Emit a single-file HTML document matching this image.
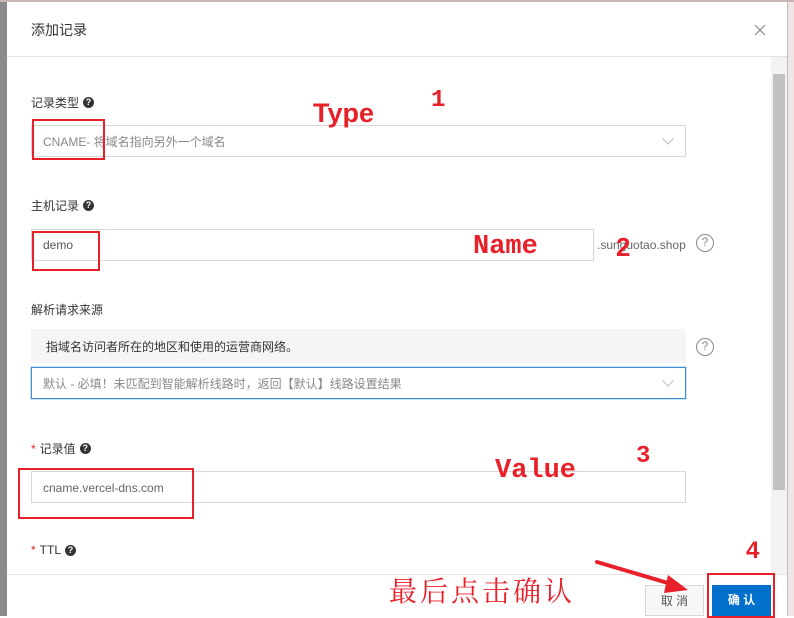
<!DOCTYPE html>
<html><head><meta charset="utf-8"><style>
*{margin:0;padding:0;box-sizing:border-box}
body{width:794px;height:616px;overflow:hidden;position:relative;background:#fff;font-family:"Liberation Sans","Noto Sans CJK SC",sans-serif;font-size:12px;color:#333}
.a{position:absolute}
.lbl{font-size:12px;color:#333;display:flex;align-items:center;gap:4px}
.q{display:inline-block;width:11px;height:11px;border-radius:50%;background:#333;color:#fff;font-size:9px;line-height:11px;text-align:center;font-weight:bold}
.box{border:1px solid #d7d7d7;background:#fff}
.txt{color:#888;font-size:12px}
.qc{width:18px;height:18px;border:1.5px solid #888;border-radius:50%;color:#888;font-size:12px;line-height:15px;text-align:center}
.red{border:2px solid #e8202a}
.rt{color:#e8202a;font-weight:bold;font-family:"Liberation Mono",monospace}
.chev{width:8px;height:8px;border-right:1px solid #bbb;border-bottom:1px solid #bbb;transform:rotate(45deg)}
.star{color:#e8202a}
</style></head><body>
<div class="a" style="left:0;top:0;width:7px;height:616px;background:#8a8a8a"></div>
<div class="a" style="left:787px;top:0;width:7px;height:616px;background:#efe5e5;border-left:1px solid #c8b8b8"></div>
<div class="a" style="left:0;top:0;width:794px;height:2px;background:#c9b5b5"></div>
<div class="a" style="left:31px;top:20px;font-size:14px;color:#333">添加记录</div>
<svg class="a" style="left:754px;top:24px" width="12" height="12"><path d="M1 1L11 11M11 1L1 11" stroke="#888" stroke-width="1.2"/></svg>
<div class="a" style="left:7px;top:56px;width:780px;height:1px;background:#e3e3e3"></div>
<div class="a" style="left:771px;top:57px;width:16px;height:517px;background:#f2f2f2"></div>
<div class="a" style="left:773px;top:74px;width:12px;height:416px;background:#c1c1c1"></div>
<div class="a lbl" style="left:31px;top:94px">记录类型 <span class="q">?</span></div>
<div class="a box" style="left:31px;top:125px;width:655px;height:32px"></div>
<div class="a txt" style="left:43px;top:133px">CNAME- 将域名指向另外一个域名</div>
<div class="a chev" style="left:664px;top:135px"></div>
<div class="a lbl" style="left:31px;top:197px">主机记录 <span class="q">?</span></div>
<div class="a box" style="left:31px;top:229px;width:563px;height:32px"></div>
<div class="a txt" style="left:43px;top:238px;color:#555">demo</div>
<div class="a" style="left:597px;top:238px;color:#666;font-size:12px">.sunguotao.shop</div>
<div class="a qc" style="left:696px;top:234px">?</div>
<div class="a lbl" style="left:31px;top:301px">解析请求来源</div>
<div class="a" style="left:31px;top:329px;width:655px;height:34px;background:#f5f5f5"></div>
<div class="a" style="left:46px;top:338px;color:#333">指域名访问者所在的地区和使用的运营商网络。</div>
<div class="a qc" style="left:696px;top:338px">?</div>
<div class="a" style="left:31px;top:367px;width:655px;height:32px;border:1.5px solid #3b8fd6;box-shadow:0 0 0 1px #cfe3f5"></div>
<div class="a txt" style="left:43px;top:375px">默认 - 必填！未匹配到智能解析线路时，返回【默认】线路设置结果</div>
<div class="a chev" style="left:664px;top:377px"></div>
<div class="a lbl" style="left:31px;top:440px"><span class="star">*</span>记录值 <span class="q">?</span></div>
<div class="a box" style="left:31px;top:471px;width:655px;height:32px"></div>
<div class="a txt" style="left:43px;top:481px;color:#666">cname.vercel-dns.com</div>
<div class="a lbl" style="left:31px;top:543px"><span class="star">*</span>TTL<span class="q">?</span></div>
<div class="a" style="left:7px;top:574px;width:780px;height:1px;background:#e3e3e3"></div>
<div class="a" style="left:645px;top:585px;width:59px;height:31px;border:1px solid #d7d7d7;background:#f7f7f7;color:#555;text-align:center;line-height:30px">取 消</div>
<div class="a" style="left:712px;top:585px;width:59px;height:31px;background:#0070cc;color:#fff;text-align:center;line-height:31px;font-weight:bold">确 认</div>
<div class="a red" style="left:32px;top:119px;width:73px;height:41px"></div>
<div class="a red" style="left:32px;top:231px;width:68px;height:40px"></div>
<div class="a red" style="left:18px;top:468px;width:176px;height:51px"></div>
<div class="a red" style="left:707px;top:573px;width:68px;height:45px"></div>
<div class="a rt" style="left:313px;top:98px;font-size:27px;font-family:'Liberation Sans',sans-serif">Type</div>
<div class="a rt" style="left:431px;top:87px;font-size:24px">1</div>
<div class="a rt" style="left:473px;top:232px;font-size:27px">Name</div>
<div class="a rt" style="left:616px;top:232px;font-size:26px;font-family:'Liberation Sans',sans-serif">2</div>
<div class="a rt" style="left:495px;top:456px;font-size:27px">Value</div>
<div class="a rt" style="left:636px;top:443px;font-size:24px">3</div>
<div class="a rt" style="left:746px;top:537px;font-size:24px;font-family:'Liberation Sans',sans-serif">4</div>
<div class="a" style="left:389px;top:570px;font-size:28px;color:#e8202a;font-family:'Noto Serif CJK SC',serif;letter-spacing:3px">最后点击确认</div>
<svg class="a" style="left:590px;top:555px" width="110" height="45"><line x1="7" y1="7" x2="88" y2="31" stroke="#e8202a" stroke-width="4" stroke-linecap="round"/><polygon points="98,35 78,20 74,38" fill="#e8202a"/></svg>
</body></html>
